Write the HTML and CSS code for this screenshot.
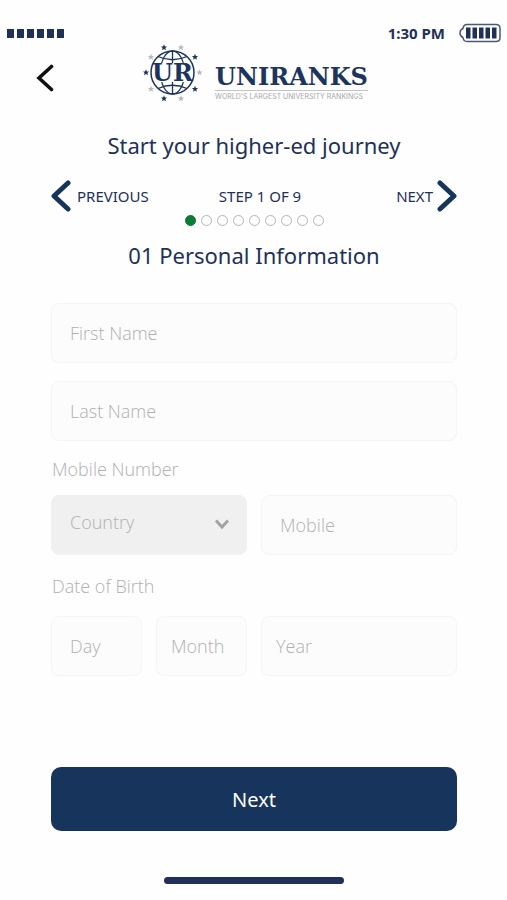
FILE: index.html
```html
<!DOCTYPE html>
<html lang="en">

<head>
    <meta charset="UTF-8">
    <meta name="viewport" content="width=device-width, initial-scale=1.0">
    <title>UniRanks - Personal Information</title>
    <link rel="stylesheet" href="styles.css">
</head>

<body>
    <!-- Status bar -->
    <div class="status-bar">
        <div class="signal">
            <span></span><span></span><span></span><span></span><span></span><span></span>
        </div>
        <div class="status-right">
            <span class="time">1:30 PM</span>
            <svg class="battery" width="44" height="20" viewBox="0 0 44 20" aria-hidden="true">
                <path d="M9 1.5H38Q42 1.5 42 5.5V14.5Q42 18.5 38 18.5H9Q5.5 18.500 5 14.500Q2 13.500 2 10Q2 6.500 5 5.500Q5.500 1.500 9 1.500Z" fill="none" stroke="#4a5878" stroke-width="1.5"/>
                <path d="M8 4.500h4.500v11H8zM14.500 4.500h4.500v11h-4.500zM21 4.500h4.500v11H21zM27.500 4.500H32v11h-4.500zM34 4.500h4.500v11H34z" fill="#1f3059"/>
            </svg>
        </div>
    </div>

    <header class="header">
        <button type="button" class="back-button" aria-label="Back">
            <svg width="18" height="28" viewBox="0 0 18 28">
                <path d="M15.500 2.500L3 14L15.500 25.500" fill="none" stroke="#111" stroke-width="3.600" stroke-linecap="round"/>
            </svg>
        </button>
        <div class="logo">
            <svg class="logo-mark" width="60" height="58" viewBox="0 0 60 58" aria-hidden="true">
                <defs>
                    <path id="star" d="M0-3.200L.9-1L3.100-1L1.400.5L2 2.800L0 1.500L-2 2.800L-1.400.5L-3.100-1L-.9-1Z"/>
                </defs>
                <g fill="none" stroke="#1c355e" stroke-width="1.300">
                    <path d="M29.500 7V20M29.500 37V50"/>
                    <ellipse cx="29.500" cy="28.500" rx="12" ry="21.500"/>
                    <path d="M15 12.500Q29.500 19 44 12.500M15 44.500Q29.500 38 44 44.500"/>
                </g>
                <rect x="9" y="19" width="41" height="19" fill="#fefefe"/>
                <circle cx="29.500" cy="28.500" r="21.500" fill="none" stroke="#1c355e" stroke-width="1.500"/>
                <text class="logo-initials" x="29.500" y="37" text-anchor="middle">UR</text>
                <g fill="#1c355e">
                    <use href="#star" x="21" y="3.500"/>
                    <use href="#star" x="52" y="13"/>
                    <use href="#star" x="52" y="45"/>
                    <use href="#star" x="21" y="54.500"/>
                    <use href="#star" x="3" y="28.500"/>
                </g>
                <g fill="#b5b8bd">
                    <use href="#star" x="38" y="3.500"/>
                    <use href="#star" x="56.500" y="28.500"/>
                    <use href="#star" x="38" y="54.500"/>
                    <use href="#star" x="8" y="45"/>
                    <use href="#star" x="8" y="13"/>
                </g>
            </svg>
            <div class="logo-text">
                <span class="logo-name">UNIRANKS</span>
                <span class="logo-tagline">WORLD'S LARGEST UNIVERSITY RANKINGS</span>
            </div>
        </div>
    </header>

    <main class="container">
        <h1>Start your higher-ed journey</h1>

        <nav class="steps">
            <a href="#" class="step-link">
                <svg width="20" height="32" viewBox="0 0 20 32" aria-hidden="true">
                    <path d="M17 3L3 16L17 29" fill="none" stroke="#17345c" stroke-width="5" stroke-linecap="round" stroke-linejoin="round"/>
                </svg>
                PREVIOUS
            </a>
            <span class="step-count">STEP 1 OF 9</span>
            <a href="#" class="step-link step-next">
                NEXT
                <svg width="20" height="32" viewBox="0 0 20 32" aria-hidden="true">
                    <path d="M3 3L17 16L3 29" fill="none" stroke="#17345c" stroke-width="5" stroke-linecap="round" stroke-linejoin="round"/>
                </svg>
            </a>
        </nav>
        <div class="dots">
            <span class="dot active"></span>
            <span class="dot"></span>
            <span class="dot"></span>
            <span class="dot"></span>
            <span class="dot"></span>
            <span class="dot"></span>
            <span class="dot"></span>
            <span class="dot"></span>
            <span class="dot"></span>
        </div>

        <h2>01 Personal Information</h2>

        <form class="info-form">
            <input type="text" class="field full" placeholder="First Name" aria-label="First Name">
            <input type="text" class="field full last-name" placeholder="Last Name" aria-label="Last Name">

            <label for="mobile" class="full">Mobile Number</label>
            <div class="select-wrap half">
                <select class="field" aria-label="Country">
                    <option>Country</option>
                </select>
                <svg class="select-arrow" width="16" height="12" viewBox="0 0 16 12" aria-hidden="true">
                    <path d="M2 2.500L8 9L14 2.500" fill="none" stroke="#a3a3a3" stroke-width="3"/>
                </svg>
            </div>
            <input type="tel" id="mobile" class="field half" placeholder="Mobile">

            <label for="day" class="full birth-label">Date of Birth</label>
            <input type="text" id="day" class="field" placeholder="Day">
            <input type="text" class="field narrow" placeholder="Month" aria-label="Month">
            <input type="text" class="field half narrow" placeholder="Year" aria-label="Year">

            <button type="submit" class="next-button full">Next</button>
        </form>

        <div class="home-bar"></div>
    </main>
</body>

</html>
```

FILE: styles.css
```css
* {
    box-sizing: border-box;
}

body {
    margin: 0;
    background-color: #fefefe;
    color: #1f3059;
    font-family: 'Noto Sans', 'Open Sans', sans-serif;
}

.status-bar {
    display: flex;
    align-items: center;
    justify-content: space-between;
    padding: 22px 5px 0 7px;
    height: 44px;
}

.signal {
    display: flex;
    gap: 3px;
}

.signal span {
    width: 7px;
    height: 9px;
    background-color: #1f3059;
}

.status-right {
    display: flex;
    align-items: center;
    gap: 13px;
}

.time {
    font-size: 15px;
    font-weight: bold;
    line-height: 20px;
}

.header {
    display: grid;
    grid-template-columns: 60px 1fr 56px;
    align-items: center;
}

.back-button {
    justify-self: end;
    display: flex;
    margin-right: 6px;
    margin-top: 10px;
    padding: 0;
    border: none;
    background: none;
    cursor: pointer;
}

.logo {
    display: flex;
    justify-content: center;
    gap: 12px;
}

.logo-initials {
    font-family: 'DejaVu Serif', serif;
    font-size: 24px;
    font-weight: bold;
    fill: #1c355e;
}

.logo-text {
    display: flex;
    flex-direction: column;
    padding-top: 19px;
}

.logo-name {
    color: #1c355e;
    font-family: 'DejaVu Serif', serif;
    font-size: 24px;
    font-weight: bold;
    line-height: 27px;
    border-bottom: 1px solid #c4c4c4;
}

.logo-tagline {
    color: #a8a8a8;
    font-family: Inter, sans-serif;
    font-size: 7px;
    line-height: 11px;
    white-space: nowrap;
}

.container {
    padding: 0 50px 0 51px;
}

h1,
h2 {
    margin: 0;
    font-size: 22px;
    font-weight: normal;
    line-height: 32px;
    text-align: center;
}

h1 {
    margin-top: 27px;
}

.steps {
    display: grid;
    grid-template-columns: 1fr auto 1fr;
    align-items: center;
    margin-top: 19px;
    font-size: 15px;
}

.step-link {
    display: flex;
    align-items: center;
    gap: 6px;
    color: #1f3059;
    text-decoration: none;
}

.step-count {
    padding-left: 12px;
}

.step-next {
    justify-content: flex-end;
    gap: 4px;
}

.dots {
    display: flex;
    justify-content: center;
    gap: 5px;
    margin-top: 3px;
}

.dot {
    width: 11px;
    height: 11px;
    border: 1px solid #b3b5b8;
    border-radius: 50%;
}

.dot.active {
    border-color: #0a7d33;
    background-color: #0a7d33;
}

h2 {
    margin-top: 13px;
}

.info-form {
    display: grid;
    grid-template-columns: repeat(4, 1fr);
    column-gap: 14px;
    margin-top: 32px;
}

.full {
    grid-column: 1 / -1;
}

.half {
    grid-column: span 2;
}

.field {
    width: 100%;
    min-width: 0;
    height: 60px;
    padding: 0 18px;
    border: 1px solid #f5f5f5;
    border-radius: 8px;
    background-color: #fcfcfc;
    color: #b0b0b0;
    font-family: 'Open Sans', sans-serif;
    font-size: 18px;
    font-weight: 300;
}

.field::placeholder {
    color: #b0b0b0;
    opacity: 1;
}

.last-name {
    margin-top: 18px;
}

.narrow {
    padding: 0 14px;
}

.info-form label {
    padding: 14px 1px 12px;
    color: #b0b0b0;
    font-family: 'Open Sans', sans-serif;
    font-size: 18px;
    font-weight: 300;
    line-height: 28px;
}

.info-form .birth-label {
    padding: 17px 1px 16px;
}

.select-wrap {
    position: relative;
}

select.field {
    appearance: none;
    padding-bottom: 6px;
    border-color: #f0f0f0;
    background-color: #f0f0f0;
}

.select-arrow {
    position: absolute;
    top: 23px;
    right: 17px;
    pointer-events: none;
}

.next-button {
    height: 64px;
    margin-top: 91px;
    border: none;
    border-radius: 10px;
    background-color: #17345c;
    color: #fff;
    font-family: 'Noto Sans', 'Open Sans', sans-serif;
    font-size: 20px;
    cursor: pointer;
}

.home-bar {
    width: 180px;
    height: 7px;
    margin: 46px auto 0;
    border-radius: 4px;
    background-color: #222f5b;
}
```
